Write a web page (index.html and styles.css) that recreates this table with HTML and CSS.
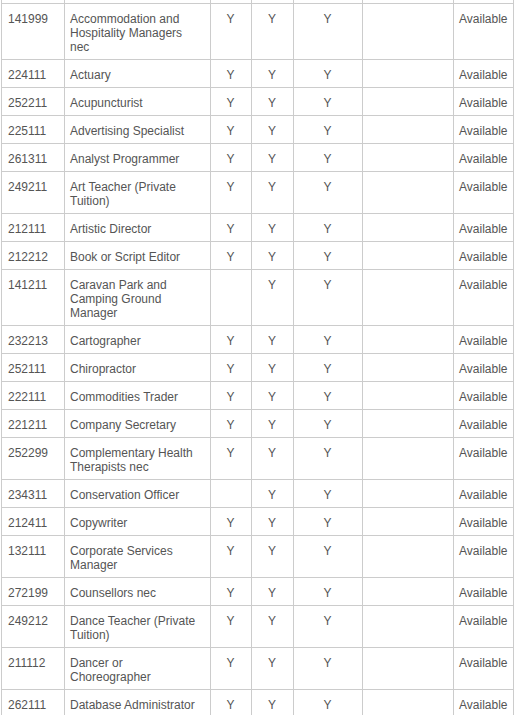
FILE: index.html
```html
<!DOCTYPE html>
<html lang="en">
<head>
<meta charset="utf-8">
<title>Occupation list</title>
<link rel="stylesheet" href="styles.css">
</head>
<body>
<table class="occ-table">
  <colgroup>
    <col class="c-code"><col class="c-name"><col class="c-a"><col class="c-b"><col class="c-c"><col class="c-d"><col class="c-e">
  </colgroup>
  <tbody>
    <tr class="stub"><td></td><td></td><td></td><td></td><td></td><td></td><td></td></tr>
    <tr><td>141999</td><td>Accommodation and Hospitality Managers nec</td><td class="yn">Y</td><td class="yn">Y</td><td class="yn">Y</td><td></td><td>Available</td></tr>
    <tr><td>224111</td><td>Actuary</td><td class="yn">Y</td><td class="yn">Y</td><td class="yn">Y</td><td></td><td>Available</td></tr>
    <tr><td>252211</td><td>Acupuncturist</td><td class="yn">Y</td><td class="yn">Y</td><td class="yn">Y</td><td></td><td>Available</td></tr>
    <tr><td>225111</td><td>Advertising Specialist</td><td class="yn">Y</td><td class="yn">Y</td><td class="yn">Y</td><td></td><td>Available</td></tr>
    <tr><td>261311</td><td>Analyst Programmer</td><td class="yn">Y</td><td class="yn">Y</td><td class="yn">Y</td><td></td><td>Available</td></tr>
    <tr><td>249211</td><td>Art Teacher (Private Tuition)</td><td class="yn">Y</td><td class="yn">Y</td><td class="yn">Y</td><td></td><td>Available</td></tr>
    <tr><td>212111</td><td>Artistic Director</td><td class="yn">Y</td><td class="yn">Y</td><td class="yn">Y</td><td></td><td>Available</td></tr>
    <tr><td>212212</td><td>Book or Script Editor</td><td class="yn">Y</td><td class="yn">Y</td><td class="yn">Y</td><td></td><td>Available</td></tr>
    <tr><td>141211</td><td>Caravan Park and Camping Ground Manager</td><td class="yn"></td><td class="yn">Y</td><td class="yn">Y</td><td></td><td>Available</td></tr>
    <tr><td>232213</td><td>Cartographer</td><td class="yn">Y</td><td class="yn">Y</td><td class="yn">Y</td><td></td><td>Available</td></tr>
    <tr><td>252111</td><td>Chiropractor</td><td class="yn">Y</td><td class="yn">Y</td><td class="yn">Y</td><td></td><td>Available</td></tr>
    <tr><td>222111</td><td>Commodities Trader</td><td class="yn">Y</td><td class="yn">Y</td><td class="yn">Y</td><td></td><td>Available</td></tr>
    <tr><td>221211</td><td>Company Secretary</td><td class="yn">Y</td><td class="yn">Y</td><td class="yn">Y</td><td></td><td>Available</td></tr>
    <tr><td>252299</td><td>Complementary Health Therapists nec</td><td class="yn">Y</td><td class="yn">Y</td><td class="yn">Y</td><td></td><td>Available</td></tr>
    <tr><td>234311</td><td>Conservation Officer</td><td class="yn"></td><td class="yn">Y</td><td class="yn">Y</td><td></td><td>Available</td></tr>
    <tr><td>212411</td><td>Copywriter</td><td class="yn">Y</td><td class="yn">Y</td><td class="yn">Y</td><td></td><td>Available</td></tr>
    <tr><td>132111</td><td>Corporate Services Manager</td><td class="yn">Y</td><td class="yn">Y</td><td class="yn">Y</td><td></td><td>Available</td></tr>
    <tr><td>272199</td><td>Counsellors nec</td><td class="yn">Y</td><td class="yn">Y</td><td class="yn">Y</td><td></td><td>Available</td></tr>
    <tr><td>249212</td><td>Dance Teacher (Private Tuition)</td><td class="yn">Y</td><td class="yn">Y</td><td class="yn">Y</td><td></td><td>Available</td></tr>
    <tr><td>211112</td><td>Dancer or Choreographer</td><td class="yn">Y</td><td class="yn">Y</td><td class="yn">Y</td><td></td><td>Available</td></tr>
    <tr><td>262111</td><td>Database Administrator</td><td class="yn">Y</td><td class="yn">Y</td><td class="yn">Y</td><td></td><td>Available</td></tr>
  </tbody>
</table>
</body>
</html>
```
FILE: styles.css
```css
html, body {
  margin: 0;
  padding: 0;
  background: #ffffff;
}

body {
  font-family: "Liberation Sans", Arial, sans-serif;
  font-size: 12px;
  line-height: 14px;
  color: #555555;
}

.occ-table {
  border-collapse: collapse;
  table-layout: fixed;
  width: 513px;
  margin-left: 1px;
}

.c-code { width: 63px; }
.c-name { width: 146px; }
.c-a { width: 41px; }
.c-b { width: 42px; }
.c-c { width: 69px; }
.c-d { width: 91px; }
.c-e { width: 60px; }

.occ-table td {
  border: 1px solid #cccccc;
  padding: 8px 6px 5px 5px;
  vertical-align: top;
  text-align: left;
}

.occ-table td:first-child {
  padding-left: 6px;
}

.occ-table td.yn {
  text-align: center;
}

.occ-table tr.stub td {
  border-top: none;
  padding: 0;
  height: 3px;
}
```
